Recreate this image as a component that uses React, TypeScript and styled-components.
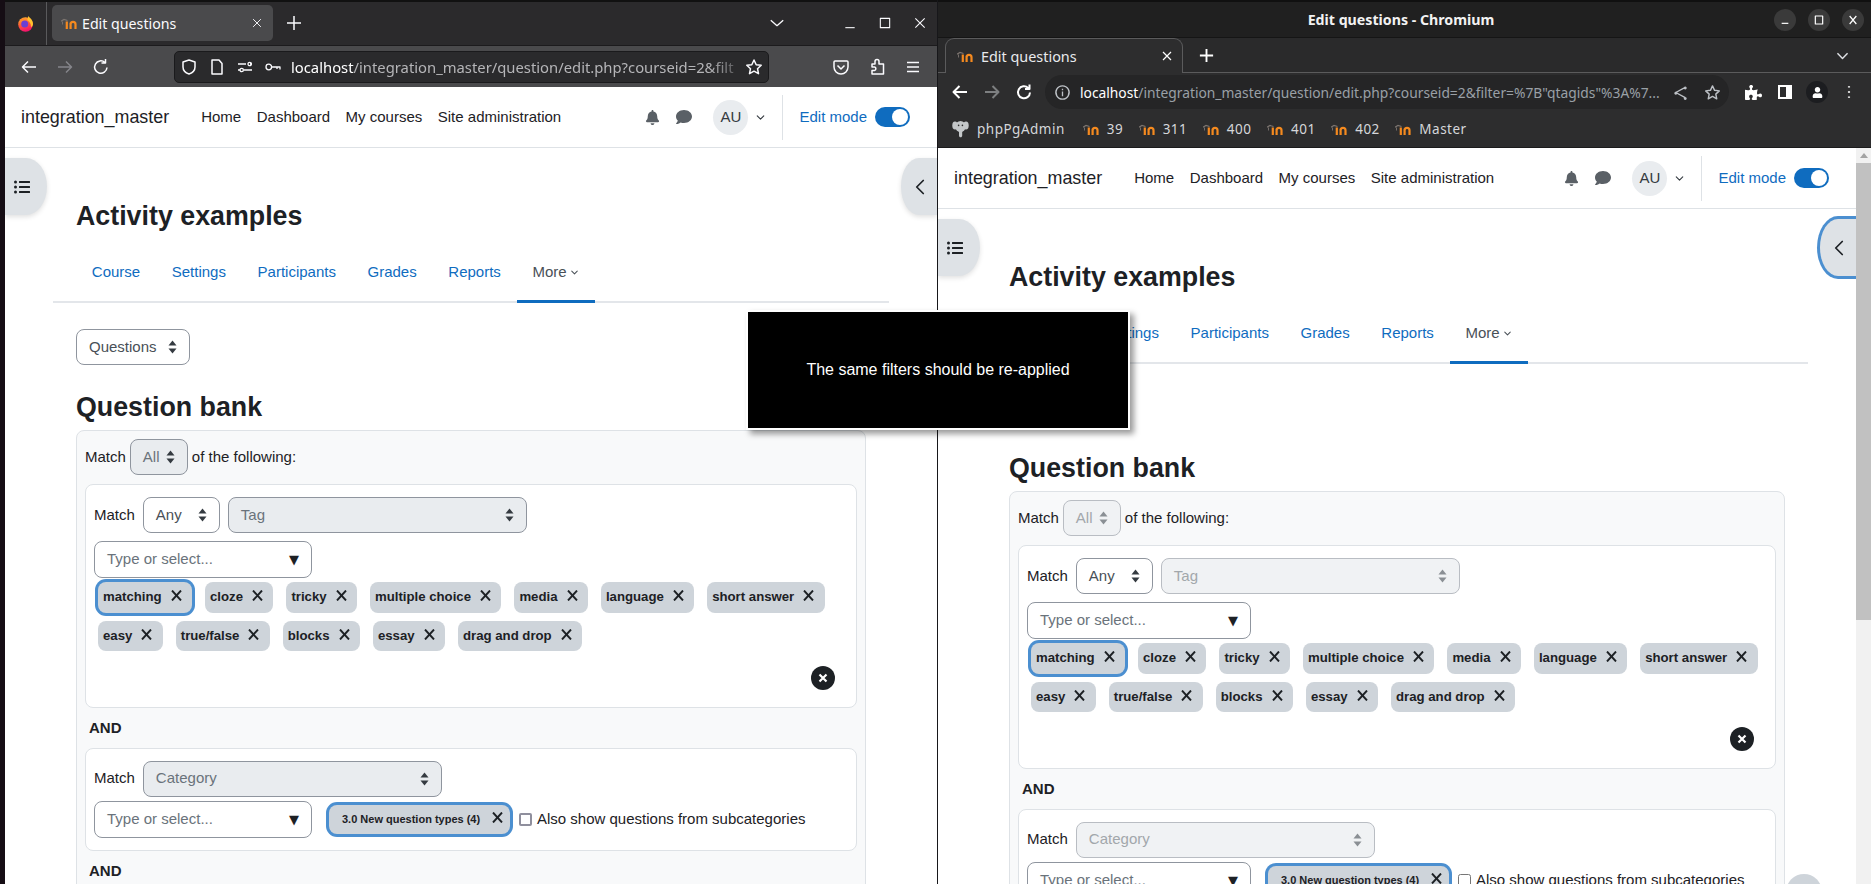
import styled, { createGlobalStyle } from 'styled-components';
import { FaBell, FaComment, FaListUl, FaPuzzlePiece, FaUser } from 'react-icons/fa';
import { ChevronDown, ChevronLeft } from 'lucide-react';

const GlobalStyle = createGlobalStyle`
  html, body {
    margin: 0;
    padding: 0;
    background: #000;
  }
  * {
    box-sizing: border-box;
  }
`;

const CHIPS = [
  'matching', 'cloze', 'tricky', 'multiple choice', 'media', 'language',
  'short answer', 'easy', 'true/false', 'blocks', 'essay', 'drag and drop',
];

const MoodleIcon = () => (
  <svg width="16" height="11" viewBox="0 0 16 11" fill="none">
    <path d="M0 3.2L3 1.5L6.500 2.500" stroke="#7d7570" strokeWidth="1.2" />
    <path d="M1.500 3.500v3" stroke="#7d7570" strokeWidth="0.9" />
    <path d="M5.800 3.500V11" stroke="#f58a1f" strokeWidth="2.200" />
    <path d="M9.600 11V4.800M9.600 6.300a2.400 2.400 0 0 1 4.900 0V11" stroke="#f58a1f" strokeWidth="2.200" />
  </svg>
);

const FirefoxLogo = () => (
  <svg width="17" height="17" viewBox="0 0 17 17">
    <defs>
      <linearGradient id="fxBody" x1="0" y1="0" x2="0.3" y2="1">
        <stop offset="0" stopColor="#ffbd2e" />
        <stop offset="0.55" stopColor="#ff5a36" />
        <stop offset="1" stopColor="#f5156c" />
      </linearGradient>
    </defs>
    <circle cx="8.5" cy="9.5" r="7.3" fill="url(#fxBody)" />
    <path d="M11 1c2 2 5 4 5 8 0 1-1 3-2 3 0-4-2-6-4-7 1-1 1-3 1-4z" fill="#ffc22e" />
    <circle cx="7.7" cy="9" r="3.5" fill="#6b3fd4" />
    <path d="M3 5c2-2 5-2 6-1-2 0-3 1-3 2-1 0-2 0-3-1z" fill="#ff8a2a" />
  </svg>
);

const ElephantIcon = () => (
  <svg width="17" height="18" viewBox="0 0 17 18" fill="#c4c7c9">
    <ellipse cx="8.5" cy="6.5" rx="5.2" ry="5.5" />
    <ellipse cx="3" cy="5.5" rx="2.7" ry="4" />
    <ellipse cx="14" cy="5.5" rx="2.7" ry="4" />
    <path d="M7 10h3.2v5.5c0 1.2-.6 1.8-1.6 1.8S7 16.7 7 15.5z" />
    <circle cx="6.6" cy="5.4" r=".8" fill="#2d2d2d" />
    <circle cx="10.4" cy="5.4" r=".8" fill="#2d2d2d" />
  </svg>
);

const Glyph = ({ size = 18, width = 1.5, color = '#fbfbfe', d }: { size?: number; width?: number; color?: string; d: string }) => (
  <svg width={size} height={size} viewBox="0 0 18 18" fill="none" stroke={color} strokeWidth={width} strokeLinejoin="round">
    <path d={d} />
  </svg>
);

const UpDownArrows = ({ color = '#343a40' }: { color?: string }) => (
  <svg width="9" height="14" viewBox="0 0 9 14" fill={color}>
    <path d="M4.5 0.5L8.5 5.5H0.5z" />
    <path d="M4.5 13.5L0.5 8.5H8.5z" />
  </svg>
);

const CrossIcon = ({ size = 11 }: { size?: number }) => (
  <svg width={size} height={size} viewBox="0 0 11 11" fill="none" stroke="#1d2125" strokeWidth="1.9">
    <path d="M1 0.5L10 10.5M10 0.5L1 10.5" />
  </svg>
);

const Select = ({ label, width, disabled, faded }: { label: string; width: number; disabled?: boolean; faded?: boolean }) => (
  <SelectBox $width={width} $disabled={disabled} $faded={faded}>
    {label}
    <UpDownArrows color={faded ? '#8a8f94' : '#343a40'} />
  </SelectBox>
);

const Chip = ({ label, focused }: { label: string; focused?: boolean }) => (
  <ChipBox $focused={focused}>
    {label}
    <CrossIcon />
  </ChipBox>
);

const TypeOrSelect = ({ width }: { width: number }) => (
  <TypeBox $width={width}>
    Type or select...
    <TypeArrow>▼</TypeArrow>
  </TypeBox>
);

type PageProps = {
  faded?: boolean;
  drawerFocus?: boolean;
  helpButton?: boolean;
  thickCheck?: boolean;
  typeWidth: number;
};

const Page = ({ faded, drawerFocus, helpButton, thickCheck, typeWidth }: PageProps) => (
  <PageRoot>
    <PageHeader>
      <Brand>integration_master</Brand>
      <TopNav>
        <span>Home</span>
        <span>Dashboard</span>
        <span>My courses</span>
        <span>Site administration</span>
      </TopNav>
      <HeaderRight>
        <HeaderIcon><FaBell size={15} /></HeaderIcon>
        <HeaderIcon><FaComment size={16} /></HeaderIcon>
        <Avatar>AU</Avatar>
        <ChevronDown size={13} color="#343a40" />
        <HeaderDivider />
        <EditLabel>Edit mode</EditLabel>
        <Toggle><ToggleKnob /></Toggle>
      </HeaderRight>
    </PageHeader>

    <DrawerLeft><FaListUl size={16} /></DrawerLeft>
    <DrawerRight $focus={drawerFocus}><ChevronLeft size={26} strokeWidth={1.6} /></DrawerRight>
    {helpButton && <HelpButton />}

    <Main>
      <Title>Activity examples</Title>
      <Tabs>
        <Tab>Course</Tab>
        <Tab>Settings</Tab>
        <Tab>Participants</Tab>
        <Tab>Grades</Tab>
        <Tab>Reports</Tab>
        <Tab $active>More<ChevronDown size={11} strokeWidth={2.2} /></Tab>
      </Tabs>
      <QuestionsRow><Select label="Questions" width={114} /></QuestionsRow>
      <SectionTitle>Question bank</SectionTitle>
      <FilterPanel>
        <MatchAllRow>
          Match <Select label="All" width={58} disabled faded={faded} /> of the following:
        </MatchAllRow>

        <FilterCard>
          <MatchRow>
            Match
            <Select label="Any" width={77} />
            <Select label="Tag" width={299} disabled faded={faded} />
          </MatchRow>
          <TypeRow><TypeOrSelect width={typeWidth} /></TypeRow>
          <ChipList>
            {CHIPS.map((chip, i) => (
              <Chip key={chip} label={chip} focused={i === 0} />
            ))}
          </ChipList>
          <RemoveRow><RemoveButton><CrossWhite viewBox="0 0 10 10"><path d="M1.5 1.5L8.5 8.5M8.5 1.5L1.5 8.5" /></CrossWhite></RemoveButton></RemoveRow>
        </FilterCard>

        <AndLabel>AND</AndLabel>

        <FilterCard>
          <MatchRow>
            Match
            <Select label="Category" width={299} disabled faded={faded} />
          </MatchRow>
          <CategoryRow>
            <TypeOrSelect width={typeWidth} />
            <CategoryChip>3.0 New question types (4)<CrossIcon /></CategoryChip>
            <CheckLabel>
              <Check type="checkbox" readOnly $thick={thickCheck} />
              Also show questions from subcategories
            </CheckLabel>
          </CategoryRow>
        </FilterCard>

        <AndLabel>AND</AndLabel>
      </FilterPanel>
    </Main>
  </PageRoot>
);

export default function App() {
  return (
    <>
      <GlobalStyle />
      <Desktop>
        <FirefoxWindow>
          <FxTabBar>
            <FxLogoSlot><FirefoxLogo /></FxLogoSlot>
            <FxTab>
              <MoodleIcon />
              <FxTabTitle>Edit questions</FxTabTitle>
              <Glyph size={14} width={1.2} d="M4 4l10 10M14 4L4 14" />
            </FxTab>
            <ChromeSlot $w={42}><Glyph size={18} d="M9 2v14M2 9h14" /></ChromeSlot>
            <Spacer />
            <ChromeSlot $w={30}><Glyph size={16} d="M2 6l7 6 7-6" /></ChromeSlot>
            <CaptionGap />
            <ChromeSlot $w={35}><Glyph size={14} d="M3 15h12" width={1.4} /></ChromeSlot>
            <ChromeSlot $w={35}><Glyph size={14} d="M3 3h12v12H3z" width={1.4} /></ChromeSlot>
            <ChromeSlot $w={35}><Glyph size={14} d="M3 3l12 12M15 3L3 15" width={1.4} /></ChromeSlot>
          </FxTabBar>
          <FxToolbar>
            <ChromeSlot $w={36}><Glyph d="M16 9H2.5M8 3.5L2.5 9 8 14.5" /></ChromeSlot>
            <ChromeSlot $w={36}><Glyph color="#85858a" d="M2 9h13.5M10 3.5L15.5 9 10 14.5" /></ChromeSlot>
            <ChromeSlot $w={36}><Glyph d="M15 9.5a6.2 6.2 0 1 1-2-5M13.5 1v4h-4" /></ChromeSlot>
            <FxUrlBar>
              <ChromeSlot $w={28}><Glyph d="M9 2l6 2v5c0 3.5-3 6-6 7-3-1-6-3.500-6-7V4z" /></ChromeSlot>
              <ChromeSlot $w={28}><Glyph d="M4 2h7l3 3.500V16H4z" /></ChromeSlot>
              <ChromeSlot $w={28}><Glyph width={1.3} d="M2 6h8M14 6h2M2 12h2M8 12h8M12 6a1.700 1.700 0 1 0 3.400 0 1.700 1.700 0 1 0-3.400 0M4 12a1.700 1.700 0 1 0 3.400 0 1.700 1.700 0 1 0-3.400 0" /></ChromeSlot>
              <ChromeSlot $w={28}><Glyph width={1.3} d="M2 9a2.800 2.800 0 1 0 5.600 0 2.800 2.800 0 1 0-5.600 0M7.600 9H16v2.500M13 9v2" /></ChromeSlot>
              <FxUrlText><UrlHost>localhost</UrlHost>/integration_master/question/edit.php?courseid=2&amp;filt</FxUrlText>
              <ChromeSlot $w={28}><Glyph d="M9 2l2.200 4.700 5 .6-3.700 3.400 1 5L9 13.200 4.500 15.700l1-5L1.800 7.300l5-.6z" /></ChromeSlot>
            </FxUrlBar>
            <Spacer />
            <ChromeSlot $w={36}><Glyph d="M3 3h12a1 1 0 0 1 1 1v5a7 7 0 0 1-14 0V4a1 1 0 0 1 1-1zM5.500 7.500L9 11l3.500-3.500" /></ChromeSlot>
            <ChromeSlot $w={36}><Glyph d="M7 3.500a2 2 0 0 1 4 0V6h4.500v10H4v-3.500h2.500a1.800 1.800 0 0 0 0-3.500H4V6h3z" /></ChromeSlot>
            <ChromeSlot $w={36}><Glyph d="M3 4.500h12M3 9h12M3 13.500h12" /></ChromeSlot>
          </FxToolbar>
          <WindowBody>
            <Page thickCheck typeWidth={218} />
          </WindowBody>
        </FirefoxWindow>

        <ChromiumWindow>
          <CrTitleBar>
            <span />
            <CrTitle>Edit questions - Chromium</CrTitle>
            <CrCaption>
              <CaptionButton><Glyph size={12} color="#fff" width={1.8} d="M4 14h10" /></CaptionButton>
              <CaptionButton><Glyph size={12} color="#fff" width={1.8} d="M3.500 3h11v12h-11z" /></CaptionButton>
              <CaptionButton><Glyph size={12} color="#fff" width={1.8} d="M4 3l10 12M14 3L4 15" /></CaptionButton>
            </CrCaption>
          </CrTitleBar>
          <CrTabStrip>
            <CrTab>
              <MoodleIcon />
              <CrTabTitle>Edit questions</CrTabTitle>
              <Glyph size={12} color="#fff" width={1.8} d="M3 3l12 12M15 3L3 15" />
            </CrTab>
            <ChromeSlot $w={46}><Glyph size={17} color="#fff" width={2} d="M9 2v14M2 9h14" /></ChromeSlot>
            <Spacer />
            <ChromeSlot $w={58}><Glyph size={13} color="#dfe1e5" width={2} d="M2 6l7 7 7-7" /></ChromeSlot>
          </CrTabStrip>
          <CrToolbar>
            <ChromeSlot $w={32}><Glyph color="#fff" width={2} d="M16 9H2.500M8.500 3L2.500 9l6 6" /></ChromeSlot>
            <ChromeSlot $w={32}><Glyph color="#7d7f81" width={2} d="M2 9h13.500M9.500 3l6 6-6 6" /></ChromeSlot>
            <ChromeSlot $w={32}><Glyph color="#fff" width={2} d="M15 9.500a6 6 0 1 1-1.800-4.500M14.500 1.500v4.500H10" /></ChromeSlot>
            <CrOmnibox>
              <OmniInfo><Glyph size={17} color="#bdc1c6" width={1.4} d="M9 2a7 7 0 1 0 .01 0zM9 8v5M9 5v1.500" /></OmniInfo>
              <CrUrlText><UrlHost>localhost</UrlHost>/integration_master/question/edit.php?courseid=2&amp;filter=%7B"qtagids"%3A%7...</CrUrlText>
              <ChromeSlot $w={32}><Glyph size={17} color="#bdc1c6" width={1.5} d="M14 3.500L4 9l10 5.500M14 3.500a.8.8 0 1 0 .01 0M14 14.500a.8.8 0 1 0 .01 0M4 9a.8.8 0 1 0 .01 0" /></ChromeSlot>
              <ChromeSlot $w={32}><Glyph size={17} color="#bdc1c6" width={1.5} d="M9 2l2.200 4.700 5 .6-3.700 3.400 1 5L9 13.200 4.500 15.700l1-5L1.800 7.300l5-.6z" /></ChromeSlot>
            </CrOmnibox>
            <CrActions>
              <ChromeSlot $w={32} $color="#fff"><FaPuzzlePiece size={17} /></ChromeSlot>
              <ChromeSlot $w={32}><SidePanelIcon /></ChromeSlot>
              <ChromeSlot $w={32} $color="#fff"><ProfileBadge><FaUser size={11} /></ProfileBadge></ChromeSlot>
              <ChromeSlot $w={32}><Glyph size={16} color="#fff" width={2.4} d="M9 2.500v1.500M9 8.250v1.500M9 14v1.500" /></ChromeSlot>
            </CrActions>
          </CrToolbar>
          <BookmarkBar>
            <FolderBookmark><ElephantIcon />phpPgAdmin</FolderBookmark>
            {['39', '311', '400', '401', '402', 'Master'].map((name) => (
              <Bookmark key={name}><MoodleIcon />{name}</Bookmark>
            ))}
          </BookmarkBar>
          <WindowBody>
            <Page faded drawerFocus helpButton typeWidth={224} />
            <Scrollbar>
              <ScrollArrow />
              <ScrollThumb />
            </Scrollbar>
          </WindowBody>
        </ChromiumWindow>

        <Notice>The same filters should be re-applied</Notice>
      </Desktop>
    </>
  );
}

const Desktop = styled.div`
  position: relative;
  display: grid;
  grid-template-columns: 937px 1fr;
  width: 1871px;
  height: 884px;
  overflow: hidden;
`;

const FirefoxWindow = styled.section`
  display: flex;
  flex-direction: column;
  height: 884px;
  min-width: 0;
  overflow: hidden;
  border-left: 5px solid #150d14;
`;

const ChromiumWindow = styled.section`
  display: flex;
  flex-direction: column;
  height: 884px;
  min-width: 0;
  overflow: hidden;
  border-left: 1px solid #17171a;
`;

const FxTabBar = styled.div`
  display: flex;
  align-items: center;
  flex: none;
  height: 46px;
  padding: 2px 0 3px;
  background: #2b2a2c;
  border-top: 2px solid #111;
  border-bottom: 1px solid #1c1b1d;
  color: #fbfbfe;
`;

const FxLogoSlot = styled.div`
  display: flex;
  align-items: center;
  justify-content: center;
  align-self: stretch;
  width: 42px;
  margin: -2px 5px -3px 0;
  border-right: 1px solid #5a5a5c;
`;

const FxTab = styled.div`
  display: flex;
  align-items: center;
  width: 221px;
  height: 36px;
  padding: 0 9px;
  border-radius: 5px;
  background: #4a4a4c;
`;

const FxTabTitle = styled.span`
  flex: 1;
  margin-left: 5px;
  font: 14.200px "Noto Sans", sans-serif;
  color: #fbfbfe;
`;

const ChromeSlot = styled.div<{ $w: number; $color?: string }>`
  display: flex;
  align-items: center;
  justify-content: center;
  flex: none;
  width: ${(p) => p.$w}px;
  color: ${(p) => p.$color || '#fbfbfe'};
`;

const Spacer = styled.div`
  flex: 1;
`;

const CaptionGap = styled.div`
  width: 40px;
`;

const FxToolbar = styled.div`
  display: flex;
  align-items: center;
  flex: none;
  height: 41px;
  padding: 0 6px;
  background: #4a4a4c;
`;

const FxUrlBar = styled.div`
  display: flex;
  align-items: center;
  width: 595px;
  height: 32px;
  margin-left: 55px;
  border-radius: 5px;
  border: 1px solid #1a1a1c;
  background: #2a2a2c;
`;

const FxUrlText = styled.div`
  flex: 1;
  min-width: 0;
  margin-left: 4px;
  white-space: nowrap;
  font: 14.800px "Noto Sans", sans-serif;
  color: #b5b5b8;
  mask-image: linear-gradient(to right, #000 93%, rgba(0, 0, 0, 0.25));
`;

const UrlHost = styled.span`
  color: #fff;
`;

const WindowBody = styled.div`
  display: flex;
  flex: 1;
  min-height: 0;
`;

const CrTitleBar = styled.div`
  display: grid;
  grid-template-columns: 1fr auto 1fr;
  align-items: center;
  flex: none;
  height: 38px;
  padding-right: 7px;
  background: #202020;
  border-top: 2px solid #101010;
  border-bottom: 1px solid #151515;
`;

const CrTitle = styled.span`
  font: bold 14.200px "Noto Sans", sans-serif;
  color: #f2f2f2;
`;

const CrCaption = styled.div`
  display: flex;
  justify-content: flex-end;
  gap: 12px;
`;

const CaptionButton = styled.div`
  display: flex;
  align-items: center;
  justify-content: center;
  width: 22px;
  height: 22px;
  border-radius: 50%;
  background: #3a3a3a;
`;

const CrTabStrip = styled.div`
  display: flex;
  align-items: flex-end;
  flex: none;
  height: 35px;
  padding-left: 7px;
  background: #2a2a2b;
  border-bottom: 1px solid #5b5b5c;

  & > div {
    align-self: center;
  }
`;

const CrTab = styled.div`
  display: flex;
  align-items: center;
  width: 238px;
  height: 35px;
  margin-bottom: -1px;
  padding: 0 9px 0 11px;
  border: 1px solid #5b5b5c;
  border-bottom: none;
  border-radius: 9px 9px 0 0;
  background: #2d2d2e;

  && {
    align-self: flex-end;
  }
`;

const CrTabTitle = styled.span`
  flex: 1;
  margin-left: 8px;
  font: 14.400px "Noto Sans", sans-serif;
  color: #e8eaed;
`;

const CrToolbar = styled.div`
  display: flex;
  align-items: center;
  flex: none;
  height: 38px;
  padding-left: 6px;
  background: #2d2d2e;
`;

const CrOmnibox = styled.div`
  display: flex;
  align-items: center;
  width: 684px;
  height: 34px;
  margin-left: 5px;
  padding-right: 1px;
  border-radius: 17px;
  background: #252526;
`;

const OmniInfo = styled.div`
  display: flex;
  align-items: center;
  justify-content: center;
  width: 35px;
`;

const CrUrlText = styled.div`
  flex: 1;
  min-width: 0;
  white-space: nowrap;
  font: 13.800px "Noto Sans", sans-serif;
  color: #9aa0a6;
`;

const CrActions = styled.div`
  display: flex;
  align-items: center;
  margin-left: 8px;
`;

const SidePanelIcon = styled.div`
  width: 14px;
  height: 14px;
  border: 2px solid #fff;
  border-right-width: 6px;
  background: #2d2d2e;
`;

const ProfileBadge = styled.div`
  display: flex;
  align-items: center;
  justify-content: center;
  width: 22px;
  height: 22px;
  border-radius: 50%;
  background: #1c1d20;
`;

const BookmarkBar = styled.div`
  display: flex;
  align-items: center;
  gap: 15.500px;
  flex: none;
  height: 37px;
  padding-left: 14px;
  background: #2d2d2e;
  border-bottom: 1px solid #1b1b1c;
`;

const Bookmark = styled.div`
  display: flex;
  align-items: center;
  gap: 8px;
  font: 13.500px "Noto Sans", sans-serif;
  letter-spacing: 0.5px;
  color: #d5d7da;
`;

const FolderBookmark = styled(Bookmark)`
  margin-right: 2.400px;
`;

const PageRoot = styled.div`
  position: relative;
  flex: 1;
  min-width: 0;
  overflow: hidden;
  background: #fff;
  font: 15px/22.500px "Liberation Sans", Arial, sans-serif;
  color: #1d2125;
`;

const PageHeader = styled.header`
  display: flex;
  align-items: center;
  height: 61px;
  padding: 0 27px 0 16px;
  border-bottom: 1px solid #dee2e6;
`;

const Brand = styled.span`
  font-size: 17.900px;
  margin-right: 32px;
`;

const TopNav = styled.nav`
  display: flex;
  gap: 15.500px;
`;

const HeaderRight = styled.div`
  display: flex;
  align-items: center;
  margin-left: auto;
`;

const HeaderIcon = styled.div`
  display: flex;
  justify-content: center;
  width: 32px;
  color: #5a6066;
`;

const Avatar = styled.div`
  display: flex;
  align-items: center;
  justify-content: center;
  width: 35px;
  height: 35px;
  margin: 0 6px 0 13px;
  border-radius: 50%;
  background: #e9ecef;
  color: #343a40;
`;

const HeaderDivider = styled.div`
  width: 1px;
  height: 45px;
  margin: 0 16px 0 15px;
  background: #dee2e6;
`;

const EditLabel = styled.span`
  color: #0f6cbf;
`;

const Toggle = styled.div`
  display: flex;
  align-items: center;
  justify-content: flex-end;
  width: 35px;
  height: 20px;
  margin-left: 8px;
  padding-right: 2px;
  border-radius: 10px;
  background: #0f6cbf;
`;

const ToggleKnob = styled.div`
  width: 16px;
  height: 16px;
  border-radius: 50%;
  background: #fff;
`;

const DrawerLeft = styled.div`
  position: absolute;
  top: 71px;
  left: 0;
  display: flex;
  align-items: center;
  justify-content: center;
  width: 42px;
  height: 57px;
  padding-right: 8px;
  border-radius: 0 50% 50% 0 / 0 50% 50% 0;
  background: #dee2e6;
  box-shadow: 0 2px 5px rgba(0, 0, 0, 0.12);
  color: #1d2125;
`;

const DrawerRight = styled.div<{ $focus?: boolean }>`
  position: absolute;
  top: 71px;
  right: 0;
  display: flex;
  align-items: center;
  justify-content: center;
  width: 36px;
  height: 57px;
  padding-left: 2px;
  border-radius: 50% 0 0 50% / 50% 0 0 50%;
  background: #dee2e6;
  box-shadow: ${(p) => (p.$focus ? '0 0 0 3px #4b8fd0' : '0 2px 5px rgba(0, 0, 0, 0.12)')};
  color: #1d2125;
`;

const HelpButton = styled.div`
  position: absolute;
  top: 726px;
  right: 34px;
  width: 36px;
  height: 36px;
  border-radius: 50%;
  background: #ced4da;
`;

const Main = styled.main`
  padding: 51px 71px 0;
`;

const Title = styled.h2`
  margin: 0 0 8px;
  font-size: 26.800px;
  font-weight: 700;
  line-height: 34px;
`;

const Tabs = styled.div`
  display: flex;
  height: 62px;
  margin: 0 -23px;
  padding-left: 23px;
  box-shadow: inset 0 -2px 0 #e3e6ea;
`;

const Tab = styled.div<{ $active?: boolean }>`
  display: flex;
  align-items: center;
  gap: 2px;
  padding: 0 15.800px;
  color: ${(p) => (p.$active ? '#495057' : '#0f6cbf')};
  box-shadow: ${(p) => (p.$active ? 'inset 0 -3px 0 #0f6cbf' : 'none')};
`;

const QuestionsRow = styled.div`
  margin: 26px 0 25px;
`;

const SectionTitle = styled.h2`
  margin: 0 0 6px;
  font-size: 26.800px;
  font-weight: 700;
  line-height: 34px;
`;

const FilterPanel = styled.div`
  min-height: 700px;
  padding: 8px;
  border: 1px solid #dee2e6;
  border-radius: 8px;
  background: #f8f9fa;
`;

const MatchAllRow = styled.div`
  display: flex;
  align-items: center;
  gap: 4px;
  margin-bottom: 9px;
`;

const FilterCard = styled.div`
  padding: 12px 8px;
  border: 1px solid #dee2e6;
  border-radius: 8px;
  background: #fff;
`;

const MatchRow = styled.div`
  display: flex;
  align-items: center;
  gap: 8px;
`;

const SelectBox = styled.div<{ $width: number; $disabled?: boolean; $faded?: boolean }>`
  display: flex;
  align-items: center;
  justify-content: space-between;
  flex: none;
  width: ${(p) => p.$width}px;
  height: 36px;
  padding: 0 12px;
  border: 1px solid ${(p) => (p.$faded ? '#b9bdc3' : '#8f959e')};
  border-radius: 8px;
  background: ${(p) => (p.$faded ? '#f0f2f4' : p.$disabled ? '#e9ecef' : '#fff')};
  color: ${(p) => (p.$faded ? '#a2a7ab' : p.$disabled ? '#6a737b' : '#495057')};
`;

const TypeRow = styled.div`
  margin-top: 8px;
`;

const TypeBox = styled.div<{ $width: number }>`
  display: flex;
  align-items: center;
  justify-content: space-between;
  flex: none;
  width: ${(p) => p.$width}px;
  height: 37px;
  padding: 0 12px;
  border: 1px solid #8f959e;
  border-radius: 8px;
  background: #fff;
  color: #6a737b;
`;

const TypeArrow = styled.span`
  font: 13px "DejaVu Sans", sans-serif;
  color: #1d2125;
`;

const ChipList = styled.div`
  display: flex;
  flex-wrap: wrap;
  gap: 8px 13px;
  margin-top: 4px;
  padding-left: 4px;
`;

const ChipBox = styled.div<{ $focused?: boolean }>`
  display: flex;
  align-items: center;
  gap: 9px;
  height: 30.500px;
  padding: 0 10.400px 0 5px;
  border-radius: 8px;
  background: #ced4da;
  font-size: 13.200px;
  font-weight: 700;
  box-shadow: ${(p) => (p.$focused ? '0 0 0 3px #4b8fd0' : 'none')};

  svg {
    margin-bottom: 3px;
  }
`;

const RemoveRow = styled.div`
  display: flex;
  justify-content: flex-end;
  margin-top: 15px;
  padding: 0 13px 5px 0;
`;

const RemoveButton = styled.div`
  display: flex;
  align-items: center;
  justify-content: center;
  width: 24px;
  height: 24px;
  border-radius: 50%;
  background: #1d2125;
`;

const CrossWhite = styled.svg`
  width: 10px;
  height: 10px;
  fill: none;
  stroke: #fff;
  stroke-width: 2.200;
`;

const AndLabel = styled.div`
  padding: 9px 4px 8px;
  font-weight: 700;
`;

const CategoryRow = styled.div`
  display: flex;
  align-items: center;
  margin-top: 4px;
`;

const CategoryChip = styled.div`
  display: flex;
  align-items: center;
  justify-content: space-between;
  width: 181px;
  height: 29px;
  margin-left: 17px;
  padding: 0 7px 0 13px;
  border-radius: 8px;
  background: #ced4da;
  font-size: 11px;
  font-weight: 700;
  white-space: nowrap;
  box-shadow: 0 0 0 3px #4b8fd0;

  svg {
    margin-bottom: 3px;
  }
`;

const CheckLabel = styled.label`
  display: flex;
  align-items: center;
  gap: 5px;
  margin-left: 9px;
  white-space: nowrap;
`;

const Check = styled.input<{ $thick?: boolean }>`
  width: 13px;
  height: 13px;
  margin: 0;
  ${(p) => p.$thick && `
    appearance: none;
    border: 2px solid #8f8f9d;
    border-radius: 2px;
    background: #fff;
  `}
`;

const Scrollbar = styled.div`
  flex: none;
  width: 15px;
  background: #f1f1f1;
`;

const ScrollArrow = styled.div`
  width: 0;
  height: 0;
  margin: 5px 0 0 3.500px;
  border-left: 4px solid transparent;
  border-right: 4px solid transparent;
  border-bottom: 5px solid #a3a3a3;
`;

const ScrollThumb = styled.div`
  width: 100%;
  height: 457px;
  margin-top: 5px;
  background: #c1c1c1;
`;

const Notice = styled.div`
  position: absolute;
  top: 310px;
  left: 746px;
  display: flex;
  align-items: center;
  justify-content: center;
  width: 384px;
  height: 120px;
  border: 2px solid #fff;
  background: #000;
  box-shadow: 4px 4px 6px rgba(0, 0, 0, 0.4);
  font: 16px "Liberation Sans", Arial, sans-serif;
  color: #fff;
`;
